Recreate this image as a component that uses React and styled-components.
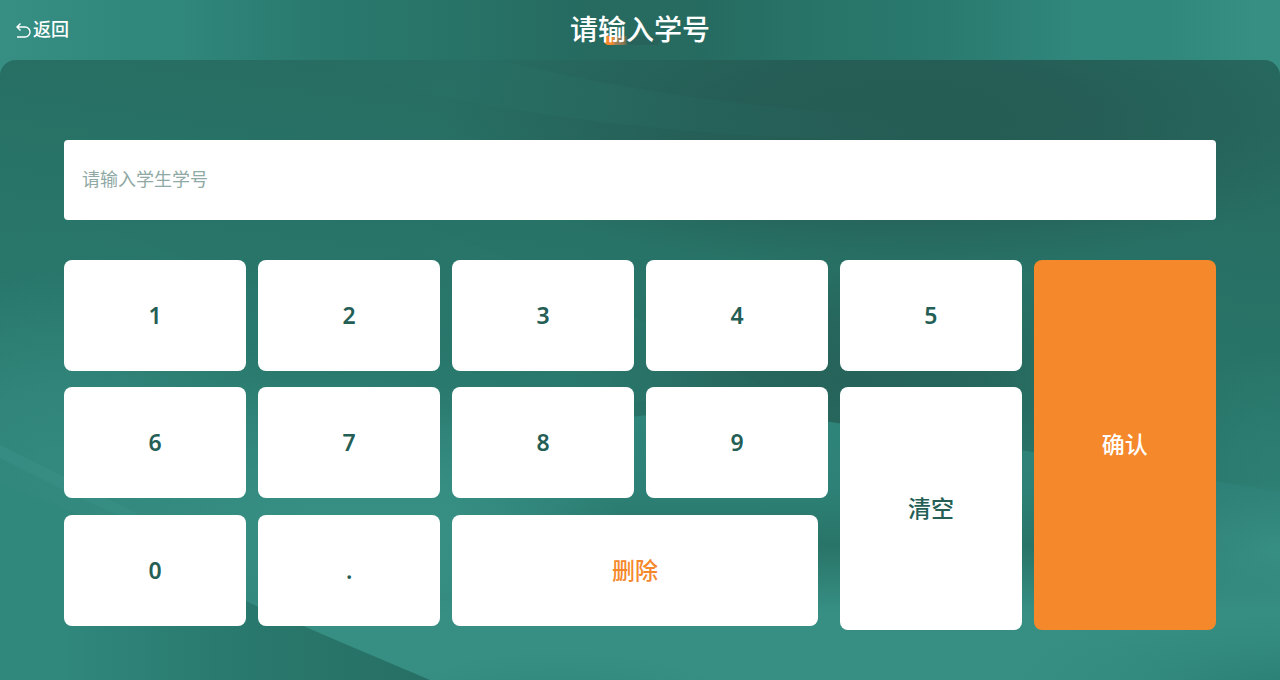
import React, { useState } from "react";
import styled, { createGlobalStyle } from "styled-components";

const GlobalStyle = createGlobalStyle`
  * {
    box-sizing: border-box;
  }

  body {
    margin: 0;
    background: #2f877c;
    font-family: "Noto Sans", "Noto Sans CJK SC", sans-serif;
  }

  button, input {
    font-family: inherit;
  }
`

const Page = styled.div`
  display: flex;
  flex-direction: column;
  min-height: 100vh;
  background: linear-gradient(90deg, #378f84 0%, #30877c 10%, #30877c 14%, #2a7a6f 24%, #287468 34%, #266a60 46%, #266a60 54%, #287468 64%, #2a7a6f 74%, #30877c 84%, #30877c 91%, #378f84 98%);
`

const Header = styled.header`
  display: grid;
  grid-template-columns: 1fr auto 1fr;
  align-items: center;
  height: 60px;
  padding: 0 16px 2px;
  color: #fff;
`

const BackButton = styled.button`
  display: flex;
  align-items: center;
  justify-self: start;
  gap: 2px;
  padding: 0;
  border: none;
  background: none;
  color: #fff;
  font-size: 18px;
  font-weight: 500;
  line-height: 24px;
  cursor: pointer;

  svg {
    width: 15px;
    height: 20px;
  }
`

const TitleGroup = styled.div`
  position: relative;
`

const Title = styled.h1`
  position: relative;
  margin: 0;
  font-size: 28px;
  font-weight: 500;
  line-height: 40px;
`

const Indicator = styled.span`
  position: absolute;
  left: 34px;
  bottom: 4px;
  width: 56px;
  height: 9px;
  border-radius: 5px;
  background: linear-gradient(90deg, #f5882a 8px, #a0815a 12px, #8a7652 20px, #27635a 24px);
`

const Main = styled.main`
  position: relative;
  flex: 1;
  padding: 80px 5% 50px;
  border-radius: 16px 16px 0 0;
  background: #2a7a6f;
  overflow: hidden;
  isolation: isolate;
`

const Backdrop = styled.svg`
  position: absolute;
  inset: 0;
  z-index: -1;
  width: 100%;
  height: 100%;
`

const StudentInput = styled.input`
  display: block;
  width: 100%;
  height: 80px;
  margin-bottom: 40px;
  padding: 0 18px 2px;
  border: none;
  border-radius: 4px;
  outline: none;
  background: #fff;
  color: #245e55;
  font-size: 18px;

  &::placeholder {
    color: #8fa9a4;
    opacity: 1;
  }
`

const Keypad = styled.div`
  display: grid;
  grid-template-columns: repeat(6, 1fr);
  grid-template-rows: 111px 112px 115px;
  gap: 16px 1%;
`

const Key = styled.button`
  height: 111px;
  padding: 0 0 2px;
  border: none;
  border-radius: 8px;
  background: #fff;
  color: #245e55;
  font-size: 23px;
  font-weight: 600;
  cursor: pointer;

  &:active {
    opacity: 0.8;
  }
`

const ActionKey = styled(Key)`
  padding-bottom: 4px;
  font-weight: 500;
`

const DeleteKey = styled(ActionKey)`
  grid-column: span 2;
  margin-right: 10px;
  color: #f5882a;
`

const ClearKey = styled(ActionKey)`
  grid-column: 5;
  grid-row: 2 / 4;
  height: auto;
`

const ConfirmKey = styled(ActionKey)`
  grid-column: 6;
  grid-row: 1 / 4;
  height: auto;
  background: #f5882a;
  color: #fff;
`

const Waves = () => (
  <Backdrop viewBox="0 0 1280 620" preserveAspectRatio="none" aria-hidden="true">
    <defs>
      <linearGradient id="base" x1="0.6" y1="0" x2="0.3" y2="1">
        <stop offset="0" stopColor="#276a60" />
        <stop offset="0.35" stopColor="#287468" />
        <stop offset="0.7" stopColor="#2a7a6f" />
        <stop offset="1" stopColor="#30877c" />
      </linearGradient>
      <radialGradient id="shade">
        <stop offset="0" stopColor="#255c54" />
        <stop offset="0.45" stopColor="#255c54" stopOpacity="0.85" />
        <stop offset="1" stopColor="#255c54" stopOpacity="0" />
      </radialGradient>
      <radialGradient id="light">
        <stop offset="0" stopColor="#378f84" />
        <stop offset="0.4" stopColor="#378f84" stopOpacity="0.7" />
        <stop offset="1" stopColor="#378f84" stopOpacity="0" />
      </radialGradient>
      <radialGradient id="corner">
        <stop offset="0" stopColor="#2a7f74" />
        <stop offset="1" stopColor="#30877c" stopOpacity="0" />
      </radialGradient>
      <linearGradient id="wave" x1="0" y1="0" x2="0" y2="1">
        <stop offset="0" stopColor="#2f857a" />
        <stop offset="0.3" stopColor="#2d8075" />
        <stop offset="0.5" stopColor="#297468" />
        <stop offset="0.75" stopColor="#378f84" />
        <stop offset="1" stopColor="#378f84" />
      </linearGradient>
      <linearGradient id="fold" x1="0" y1="0" x2="1" y2="0">
        <stop offset="0" stopColor="#30877c" />
        <stop offset="0.15" stopColor="#30877c" />
        <stop offset="0.5" stopColor="#2a7a6f" />
        <stop offset="1" stopColor="#276f64" />
      </linearGradient>
      <linearGradient id="streak" x1="0" y1="0" x2="1" y2="0">
        <stop offset="0" stopColor="#2d8075" stopOpacity="0" />
        <stop offset="0.5" stopColor="#2d8075" stopOpacity="0.25" />
        <stop offset="1" stopColor="#2d8075" stopOpacity="0" />
      </linearGradient>
    </defs>
    <rect width="1280" height="620" fill="url(#base)" />
    <ellipse cx="900" cy="60" rx="460" ry="150" fill="url(#shade)" />
    <ellipse cx="850" cy="320" rx="280" ry="130" fill="url(#shade)" opacity="0.7" />
    <path d="M500 0 Q680 46 920 58 L920 80 Q560 80 300 0 Z" fill="url(#streak)" opacity="0.6" />
    <path d="M410 160 Q530 205 640 260 Q740 310 800 350 L420 330 Z" fill="url(#streak)" />
    <path d="M0 130 Q120 170 260 230 L640 380 H0 Z" fill="url(#streak)" />
    <ellipse cx="60" cy="400" rx="240" ry="190" fill="url(#light)" opacity="0.7" />
    <ellipse cx="320" cy="460" rx="280" ry="150" fill="url(#light)" />
    <ellipse cx="1280" cy="410" rx="120" ry="120" fill="url(#light)" opacity="0.3" />
    <path d="M460 400 Q640 330 830 362 Q1060 395 1280 432 V620 H240 V540 H460 Z" fill="url(#wave)" />
    <ellipse cx="440" cy="470" rx="180" ry="120" fill="url(#light)" />
    <ellipse cx="1290" cy="490" rx="190" ry="70" fill="url(#light)" />
    <ellipse cx="1290" cy="630" rx="300" ry="90" fill="url(#corner)" />
    <ellipse cx="560" cy="640" rx="180" ry="50" fill="url(#corner)" opacity="0.7" />
    <path d="M0 385 Q80 425 150 460 L170 478 Q80 440 0 398 Z" fill="#378f84" opacity="0.7" />
    <path d="M0 424 Q110 462 250 543 Q340 582 430 620 H0 Z" fill="url(#fold)" />
  </Backdrop>
)

export default function App() {
  const [value, setValue] = useState("");

  const digit = (key) => (
    <Key key={key} type="button" onClick={() => setValue(value + key)}>{key}</Key>
  );

  return (
    <>
      <GlobalStyle />
      <Page>
        <Header>
          <BackButton type="button">
            <svg viewBox="0 0 15 20" fill="none" stroke="currentColor" strokeWidth="1.4">
              <path d="M4.500 4.500 1 8l3.500 3.500M1 8h8a5 5 0 0 1 0 10H1" />
            </svg>
            返回
          </BackButton>
          <TitleGroup>
            <Indicator />
            <Title>请输入学号</Title>
          </TitleGroup>
        </Header>
        <Main>
          <Waves />
          <StudentInput
            aria-label="学生学号"
            placeholder="请输入学生学号"
            value={value}
            onChange={(event) => setValue(event.target.value)}
          />
          <Keypad>
            {["1", "2", "3", "4", "5"].map(digit)}
            <ConfirmKey type="button">确认</ConfirmKey>
            {["6", "7", "8", "9"].map(digit)}
            <ClearKey type="button" onClick={() => setValue("")}>清空</ClearKey>
            {["0", "."].map(digit)}
            <DeleteKey type="button" onClick={() => setValue(value.slice(0, -1))}>删除</DeleteKey>
          </Keypad>
        </Main>
      </Page>
    </>
  )
}
